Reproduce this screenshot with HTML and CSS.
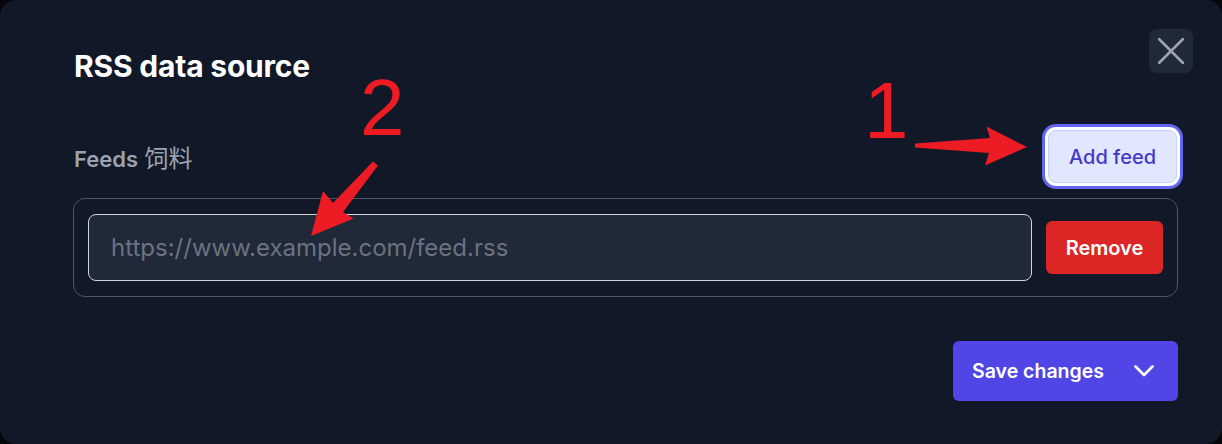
FILE: index.html
```html
<!DOCTYPE html>
<html lang="en">
<head>
<meta charset="utf-8">
<title>RSS data source</title>
<link rel="stylesheet" href="styles.css">
</head>
<body>
<div class="modal">
  <header class="head">
    <h2 class="title">RSS data source</h2>
  </header>
  <button class="close" aria-label="Close">
    <svg width="26" height="26" viewBox="0 0 26 26"><path d="M1 1 L25 25 M25 1 L1 25" stroke="#9ca3af" stroke-width="2.6" stroke-linecap="round" fill="none"/></svg>
  </button>
  <div class="feeds-head">
    <label class="label">Feeds <span class="cjk">饲料</span></label>
    <button class="add">Add feed</button>
  </div>
  <div class="feed-list">
    <div class="feed-row">
      <input class="feed-input" type="text" placeholder="https://www.example.com/feed.rss">
      <button class="remove">Remove</button>
    </div>
  </div>
  <div class="footer">
    <button class="save"><span>Save changes</span>
      <svg width="20" height="12" viewBox="0 0 20 12"><path d="M1.5 1.5 L10 10 L18.5 1.5" stroke="#fff" stroke-width="2.6" stroke-linecap="round" stroke-linejoin="round" fill="none"/></svg>
    </button>
  </div>
  <svg class="annot" width="1222" height="444" viewBox="0 0 1222 444">
    <text x="864" y="138" class="num">1</text>
    <text x="360" y="135" class="num">2</text>
    <polygon points="915,143.5 990,138 986.5,126.5 1027,147 985,165.5 989,153 915,147.5" fill="#ed1c24"/>
    <polygon points="373,161.5 378,165.5 343,212 353.5,218.5 311,236 323,191 333,203" fill="#ed1c24"/>
  </svg>
</div>
</body>
</html>
```
FILE: styles.css
```css
* { box-sizing: border-box; }
html, body { margin: 0; padding: 0; }
body {
  background: #05070b;
  width: 1222px;
  height: 444px;
  overflow: hidden;
  font-family: "Inter", "Noto Sans CJK SC", sans-serif;
}
.modal {
  position: relative;
  width: 1222px;
  height: 444px;
  background: #111827;
  border-radius: 16px;
  padding: 46px 44px 0 73px;
}
.head { display: flex; align-items: center; }
.title {
  margin: 0;
  font-size: 30px;
  line-height: 40px;
  font-weight: 700;
  color: #ffffff;
  padding-left: 1px;
  letter-spacing: -0.2px;
}
.close {
  position: absolute;
  top: 29px;
  right: 29px;
  width: 44px;
  height: 44px;
  border: none;
  border-radius: 8px;
  background: #1f2937;
  display: flex;
  align-items: center;
  justify-content: center;
  padding: 0;
}
.feeds-head {
  margin-top: 44px;
  display: flex;
  align-items: center;
  justify-content: space-between;
  height: 53px;
  padding-right: 1px;
}
.label {
  font-size: 22px;
  font-weight: 600;
  color: #9ca3af;
  padding-left: 1px;
}
.cjk {
  font-size: 24px;
  font-weight: 400;
  margin-left: 1px;
}
.add {
  width: 129px;
  height: 53px;
  border: 1px solid #c7d2fe;
  border-radius: 8px;
  background: #e0e7ff;
  color: #4338ca;
  font-family: inherit;
  font-size: 20px;
  font-weight: 500;
  box-shadow: 0 0 0 3px #ffffff, 0 0 0 6px #6366f1;
  padding: 0;
}
.feed-list {
  margin-top: 15px;
  border: 1px solid #4b5563;
  border-radius: 12px;
  padding: 15px 14px;
}
.feed-row {
  display: flex;
  align-items: center;
  gap: 14px;
}
.feed-input {
  flex: 1;
  height: 67px;
  background: #1f2937;
  border: 1px solid #d1d5db;
  border-radius: 8px;
  padding: 0 22px;
  font-family: inherit;
  font-size: 24px;
  color: #e5e7eb;
  outline: none;
}
.feed-input::placeholder { color: #6b7280; }
.remove {
  width: 117px;
  height: 53px;
  border: none;
  border-radius: 6px;
  background: #dc2626;
  color: #ffffff;
  font-family: inherit;
  font-size: 20px;
  font-weight: 600;
  padding: 0;
}
.footer {
  margin-top: 44px;
  display: flex;
  justify-content: flex-end;
}
.save {
  width: 225px;
  height: 60px;
  border: none;
  border-radius: 6px;
  background: #4f46e5;
  color: #ffffff;
  font-family: inherit;
  font-size: 19.5px;
  font-weight: 600;
  display: flex;
  align-items: center;
  justify-content: space-between;
  padding: 0 24px 0 19px;
}
.annot {
  position: absolute;
  left: 0;
  top: 0;
  pointer-events: none;
}
.num {
  font-family: "Liberation Sans", sans-serif;
  font-size: 80px;
  fill: #ed1c24;
}
```
